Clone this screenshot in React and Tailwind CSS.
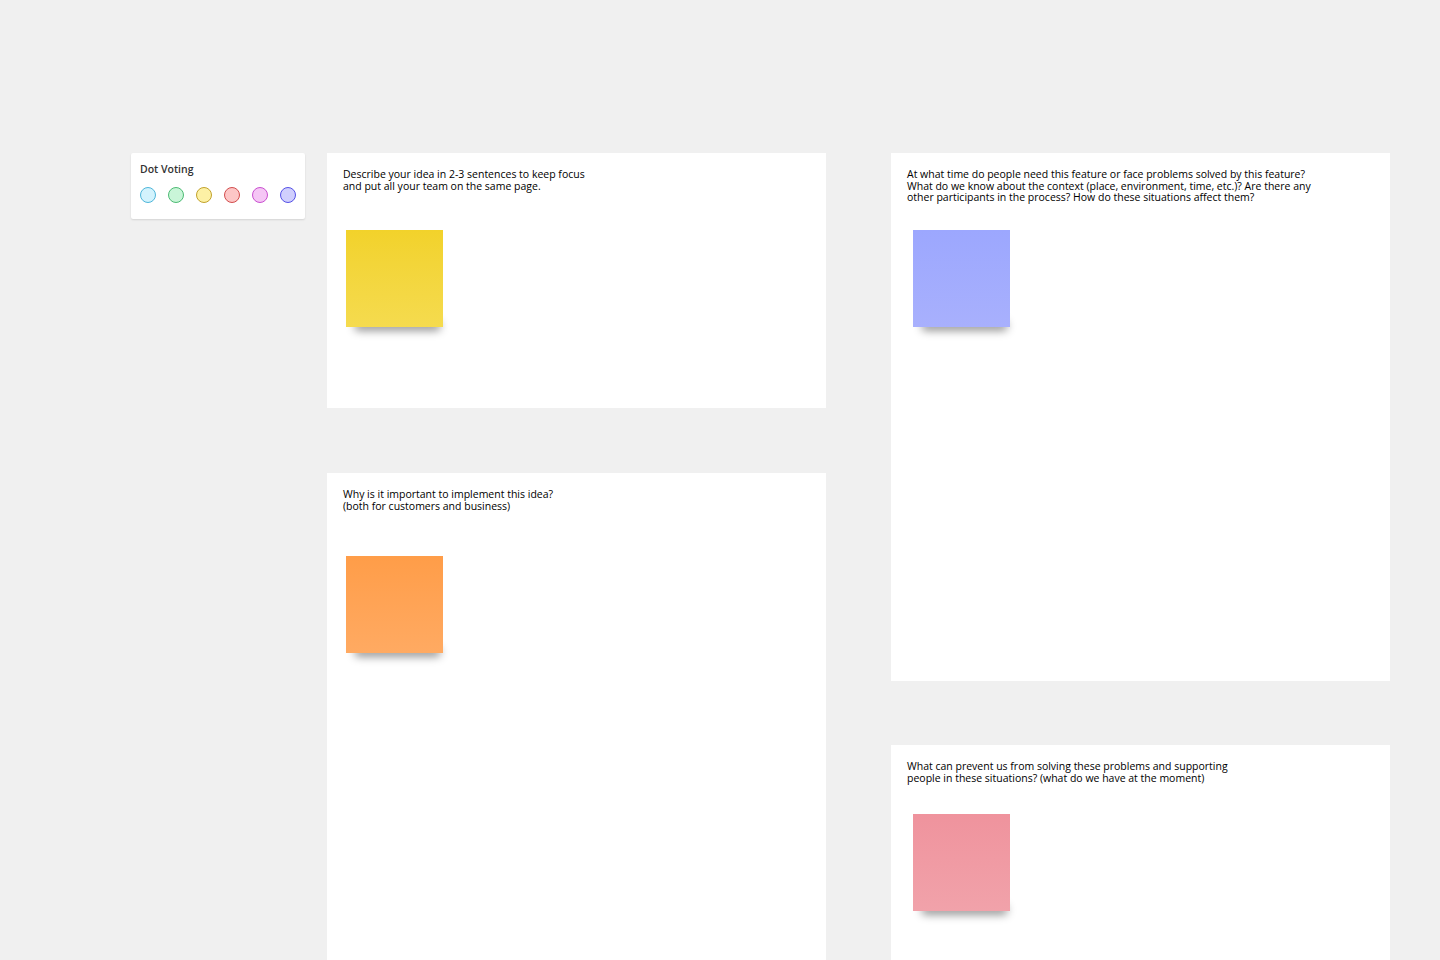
import React from "react";

const Sticky = ({ from, to, className }) => (
  <div className={"relative w-[97px] h-[97px] " + className}>
    <div className="absolute left-[8px] right-[2px] bottom-[-4px] h-[10px] bg-black/40 blur-[4px] rounded-full" />
    <div className={"relative w-full h-full bg-gradient-to-b " + from + " " + to} />
  </div>
);

const Frame = ({ text, h, children, stickyTop }) => (
  <div className={"bg-white px-4 pt-[16px] " + h}>
    <p className="text-[10.5px] leading-[11.6px] text-black whitespace-pre-line">{text}</p>
    <div className={"ml-[3px] " + stickyTop}>{children}</div>
  </div>
);

export default function App() {
  const dots = [
    "bg-[#d3f3fd] border-[#4fb6da]",
    "bg-[#c9f5d8] border-[#4dbb74]",
    "bg-[#fdf1a5] border-[#c2a22c]",
    "bg-[#fdc6c6] border-[#d24d4d]",
    "bg-[#f5c6f5] border-[#c94fd0]",
    "bg-[#d0cffd] border-[#5551e6]",
  ];
  return (
    <div
      className="w-[1440px] h-[960px] overflow-hidden bg-[#f0f0f0] flex items-start pt-[153px] pl-[131px]"
      style={{ fontFamily: '"Open Sans", sans-serif' }}
    >
      <div className="w-[174px] h-[66px] bg-white rounded-[2px] shadow-[0_1px_2px_rgba(0,0,0,0.12)] px-[9px] pt-[9px]">
        <div className="text-[10.5px] font-semibold text-[#333]">Dot Voting</div>
        <div className="flex gap-[12px] mt-[9px]">
          {dots.map((d) => (
            <div key={d} className={"w-[16px] h-[16px] rounded-full border-[1.5px] " + d} />
          ))}
        </div>
      </div>

      <div className="ml-[22px] w-[499px] flex flex-col gap-[65px]">
        <Frame
          h="h-[255px]"
          stickyTop="mt-[38px]"
          text={"Describe your idea in 2-3 sentences to keep focus\nand put all your team on the same page."}
        >
          <Sticky from="from-[#f2d22a]" to="to-[#f5db4e]" />
        </Frame>
        <Frame
          h="h-[500px]"
          stickyTop="mt-[44px]"
          text={"Why is it important to implement this idea?\n(both for customers and business)"}
        >
          <Sticky from="from-[#ff9d48]" to="to-[#ffaa62]" />
        </Frame>
      </div>

      <div className="ml-[65px] w-[499px] flex flex-col gap-[64px]">
        <Frame
          h="h-[528px]"
          stickyTop="mt-[26px]"
          text={"At what time do people need this feature or face problems solved by this feature?\nWhat do we know about the context (place, environment, time, etc.)? Are there any\nother participants in the process? How do these situations affect them?"}
        >
          <Sticky from="from-[#9ca7fe]" to="to-[#a8b0fd]" className="ml-[3px]" />
        </Frame>
        <Frame
          h="h-[300px]"
          stickyTop="mt-[30px]"
          text={"What can prevent us from solving these problems and supporting\npeople in these situations? (what do we have at the moment)"}
        >
          <Sticky from="from-[#ef939d]" to="to-[#f1a2aa]" className="ml-[3px]" />
        </Frame>
      </div>
    </div>
  );
}
